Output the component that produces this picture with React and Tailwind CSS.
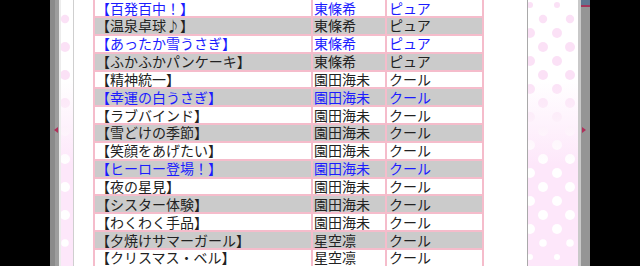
import React from 'react';

const rows = [
  { title: '【百発百中！】', name: '東條希', type: 'ピュア', hot: true },
  { title: '【温泉卓球♪】', name: '東條希', type: 'ピュア' },
  { title: '【あったか雪うさぎ】', name: '東條希', type: 'ピュア', hot: true },
  { title: '【ふかふかパンケーキ】', name: '東條希', type: 'ピュア' },
  { title: '【精神統一】', name: '園田海未', type: 'クール' },
  { title: '【幸運の白うさぎ】', name: '園田海未', type: 'クール', hot: true },
  { title: '【ラブバインド】', name: '園田海未', type: 'クール' },
  { title: '【雪どけの季節】', name: '園田海未', type: 'クール' },
  { title: '【笑顔をあげたい】', name: '園田海未', type: 'クール' },
  { title: '【ヒーロー登場！】', name: '園田海未', type: 'クール', hot: true },
  { title: '【夜の星見】', name: '園田海未', type: 'クール' },
  { title: '【シスター体験】', name: '園田海未', type: 'クール' },
  { title: '【わくわく手品】', name: '園田海未', type: 'クール' },
  { title: '【夕焼けサマーガール】', name: '星空凛', type: 'クール' },
  { title: '【クリスマス・ベル】', name: '星空凛', type: 'クール' },
];

// polka dot strip, pink dots on white fading into white dots on pink
const DotStrip = ({ width, id, evenX, oddX }) => {
  const dots = [];
  for (let i = 0; i < 20; i++) {
    const y = 5 + i * 14;
    const xs = i % 2 === 0 ? oddX : evenX;
    const r = y < 10 ? 3 : y < 25 ? 4.2 : y > 250 ? 3 : y > 232 ? 3.8 : 5;
    xs.forEach((x) => dots.push(<circle key={`${i}-${x}`} cx={x} cy={y} r={r} fill={`url(#${id}-dot)`} />));
  }
  return (
    <svg width={width} height="266" className="shrink-0 block">
      <defs>
        <linearGradient id={`${id}-bg`} gradientUnits="userSpaceOnUse" x1="0" y1="0" x2="0" y2="266">
          <stop offset="0.3" stopColor="#ffffff" />
          <stop offset="0.62" stopColor="#fde7fa" />
        </linearGradient>
        <linearGradient id={`${id}-dot`} gradientUnits="userSpaceOnUse" x1="0" y1="0" x2="0" y2="266">
          <stop offset="0.3" stopColor="#fbe1f6" />
          <stop offset="0.62" stopColor="#ffffff" />
        </linearGradient>
      </defs>
      <rect width={width} height="266" fill={`url(#${id}-bg)`} />
      {dots}
    </svg>
  );
};

const App = () => {
  return (
    <div className="w-[640px] h-[266px] bg-black flex overflow-hidden font-['Noto_Sans_CJK_JP','Noto_Sans',sans-serif]">
      <div className="w-[50px] shrink-0" />

      {/* left frame */}
      <div className="relative w-[5px] shrink-0 bg-[#8a8a8a]" />
      <div className="relative w-[4px] shrink-0 bg-[#9d9d9d]">
        <div className="absolute left-[-1px] top-[127px] w-0 h-0 border-y-[3px] border-y-transparent border-r-[4px] border-r-[#b0305a]" />
      </div>
      <div className="w-[2px] shrink-0 bg-[#ececec]" />
      <DotStrip width={12} id="dl" evenX={[4]} oddX={[-9.5, 17.5]} />
      <div className="w-[1px] shrink-0 bg-[#cfcfcf]" />

      {/* page content */}
      <div className="w-[453px] shrink-0 bg-white pl-[19px]">
        <div className="w-[391px] mt-[-1.857px] border-l-2 border-[#f5bccb] text-[14px] leading-[15px]">
          {rows.map((r, i) => (
            <div
              key={i}
              className={`flex h-[17.857px] border-t-2 border-[#f5bccb] ${i % 2 === 1 ? 'bg-[#cbcbcb]' : 'bg-white'} ${r.hot ? 'text-[#1c1cff]' : 'text-[#222222]'}`}
            >
              <div className="w-[218px] border-r-2 border-[#f5bccb] pl-[1px] flex items-center whitespace-nowrap">{r.title}</div>
              <div className="w-[74px] border-r-2 border-[#f5bccb] pl-[1px] flex items-center whitespace-nowrap">{r.name}</div>
              <div className="w-[97px] border-r-2 border-[#f5bccb] pl-[2px] flex items-center whitespace-nowrap">{r.type}</div>
            </div>
          ))}
        </div>
      </div>

      {/* right frame */}
      <div className="w-[1px] shrink-0 bg-[#a9a9a9]" />
      <DotStrip width={50} id="dr" evenX={[15, 42]} oddX={[2, 29]} />
      <div className="w-[3px] shrink-0 bg-[#c9c9c9]" />
      <div className="relative w-[9px] shrink-0 bg-[#959595] flex flex-col">
        <div className="h-[5px] bg-[#5f7690]" />
        <div className="h-[2px] bg-[#a3355a]" />
        <div className="absolute left-[1px] top-[127px] w-0 h-0 border-y-[3px] border-y-transparent border-l-[4px] border-l-[#b0305a]" />
      </div>
      <div className="flex-1" />
    </div>
  );
};

export default App;
